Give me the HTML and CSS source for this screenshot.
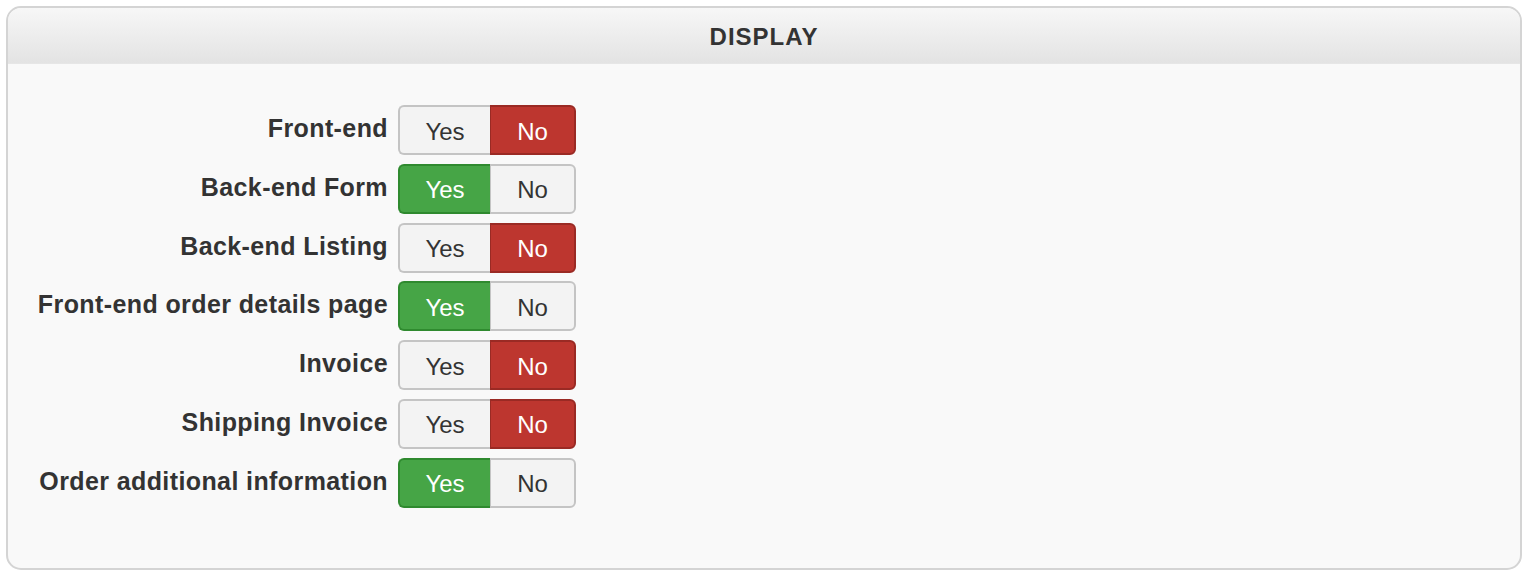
FILE: index.html
```html
<!DOCTYPE html>
<html>
<head>
<meta charset="utf-8">
<link rel="stylesheet" href="styles.css">
</head>
<body>
<div class="panel">
  <div class="panel-head">DISPLAY</div>
  <div class="panel-body">
    <div class="row"><div class="label">Front-end</div><div class="toggle"><span class="btn">Yes</span><span class="btn no on">No</span></div></div>
    <div class="row"><div class="label">Back-end Form</div><div class="toggle"><span class="btn yes on">Yes</span><span class="btn">No</span></div></div>
    <div class="row"><div class="label">Back-end Listing</div><div class="toggle"><span class="btn">Yes</span><span class="btn no on">No</span></div></div>
    <div class="row"><div class="label">Front-end order details page</div><div class="toggle"><span class="btn yes on">Yes</span><span class="btn">No</span></div></div>
    <div class="row"><div class="label">Invoice</div><div class="toggle"><span class="btn">Yes</span><span class="btn no on">No</span></div></div>
    <div class="row"><div class="label">Shipping Invoice</div><div class="toggle"><span class="btn">Yes</span><span class="btn no on">No</span></div></div>
    <div class="row"><div class="label">Order additional information</div><div class="toggle"><span class="btn yes on">Yes</span><span class="btn">No</span></div></div>
  </div>
</div>
</body>
</html>
```
FILE: styles.css
```css
html, body { margin: 0; padding: 0; background: #ffffff; }
body {
  font-family: "Liberation Sans", Arial, sans-serif;
  color: #333;
  padding: 6px 8px 6px 6px;
}
.panel {
  border: 2px solid #d4d4d4;
  border-radius: 15px;
  background: #f9f9f9;
  overflow: hidden;
  height: 564px;
  box-sizing: border-box;
}
.panel-head {
  height: 56px;
  background: linear-gradient(#f7f7f7, #e3e3e3);
  border-bottom: 1px solid #e6e6e6;
  box-sizing: border-box;
  display: flex;
  align-items: center;
  justify-content: center;
  font-weight: bold;
  font-size: 24px;
  letter-spacing: 1px;
  color: #333;
  padding-top: 2px;
}
.panel-body {
  padding-top: 41px;
  display: flex;
  flex-direction: column;
  gap: 8.8px;
}
.row {
  display: flex;
  align-items: flex-start;
  gap: 10px;
}
.label {
  width: 380px;
  text-align: right;
  font-weight: bold;
  font-size: 25px;
  letter-spacing: 0.4px;
  line-height: 26px;
  padding-top: 10px;
  color: #333;
}
.toggle {
  display: flex;
  height: 50px;
}
.btn {
  display: flex;
  align-items: center;
  justify-content: center;
  box-sizing: border-box;
  height: 50px;
  font-size: 24px;
  color: #333;
  background: #f3f3f3;
  border: 2px solid #c4c4c4;
  padding-top: 3px;
}
.btn:first-child {
  width: 92px;
  border-radius: 6px 0 0 6px;
  border-right: none;
}
.btn:last-child {
  width: 86px;
  border-radius: 0 6px 6px 0;
  border-left: 1px solid #c4c4c4;
}
.btn.yes.on {
  background: #46a546;
  border-color: #2f8a2f;
  color: #fff;
}
.btn.no.on {
  background: #bd362f;
  border-color: #9a2a24;
  color: #fff;
}
```
